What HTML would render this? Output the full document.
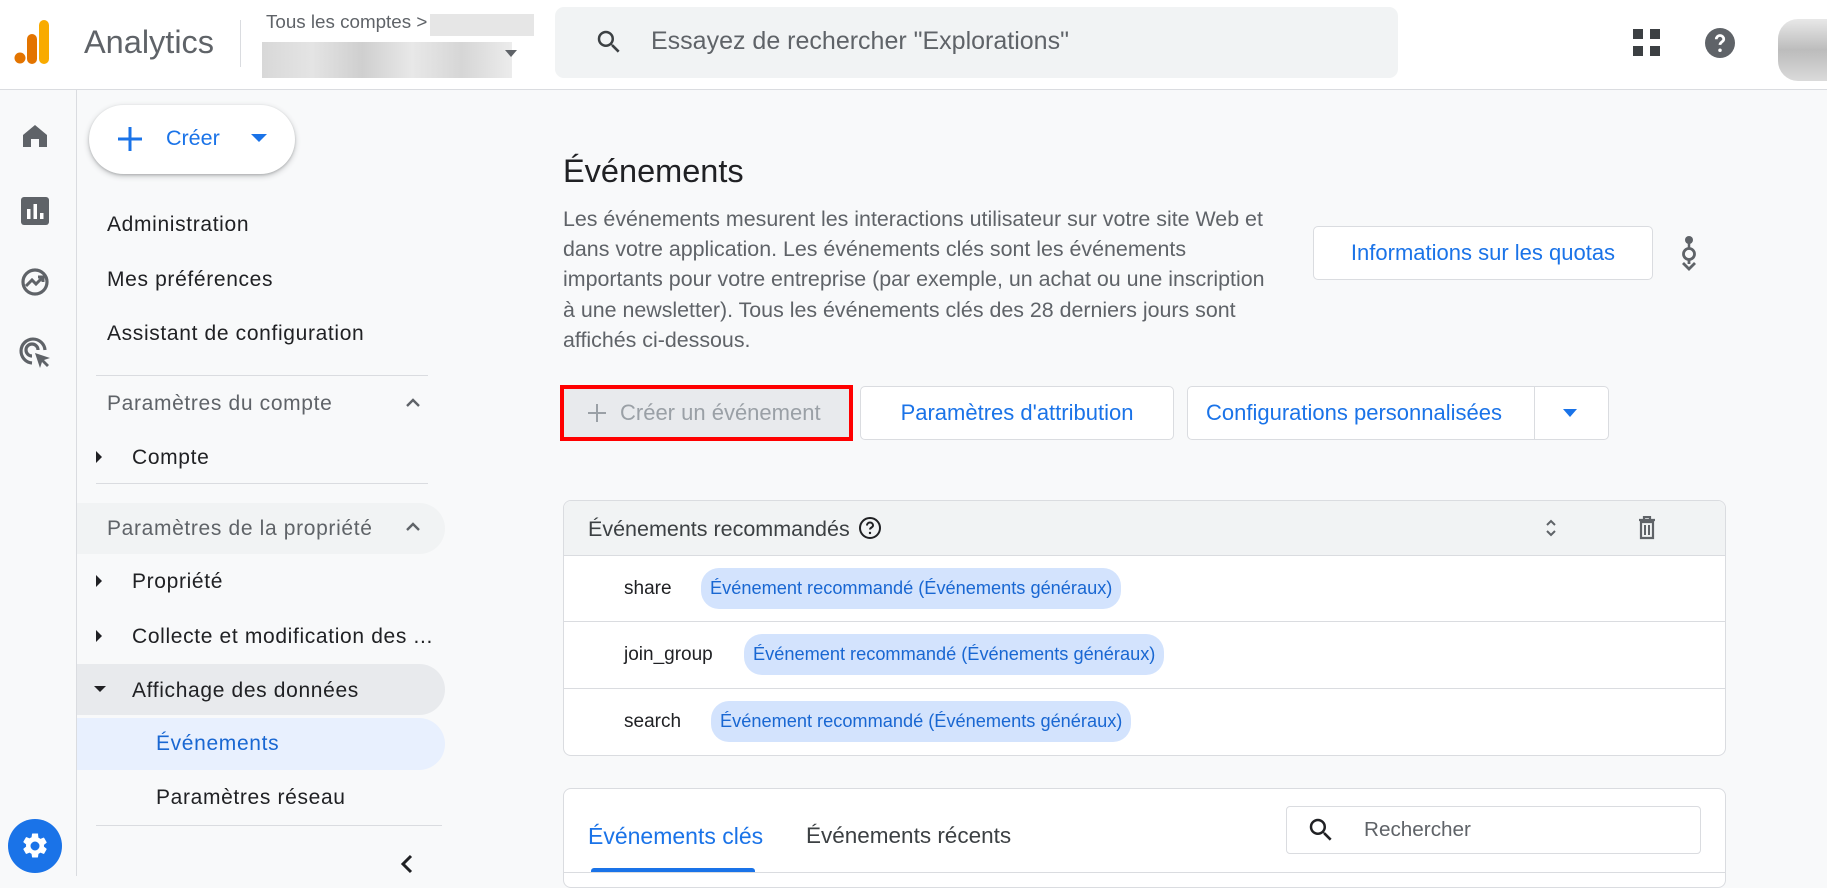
<!DOCTYPE html>
<html><head><meta charset="utf-8"><style>
*{box-sizing:border-box;margin:0;padding:0}
body{width:1827px;height:876px;overflow:hidden;background:#f8f9fa;font-family:"Liberation Sans",Arial,sans-serif;color:#202124;position:relative}
.abs{position:absolute}
.hdr{left:0;top:0;width:1827px;height:90px;background:#fff;border-bottom:1px solid #dadce0}
.rail{left:0;top:90px;width:77px;height:786px;border-right:1px solid #dadce0;background:#f8f9fa}
.nav{font-size:21px;letter-spacing:0.65px;color:#202124;white-space:nowrap}
.sep{height:1px;background:#dadce0}
.btn{background:#fff;border:1px solid #dadce0;border-radius:5px;color:#1a73e8;font-size:22px;display:flex;align-items:center;justify-content:center;white-space:nowrap}
.chip{background:#d3e3fd;color:#1967d2;border-radius:18px;height:41px;font-size:18.2px;display:flex;align-items:center;padding:0 9px;white-space:nowrap}
.rowt{font-size:19px;color:#202124}
</style></head><body>
<div class="abs hdr"></div>
<svg class="abs" style="left:14px;top:20px" width="36" height="44" viewBox="0 0 36 44"><rect x="25" y="0" width="10" height="44" rx="5" fill="#f9ab00"/><rect x="13" y="14" width="10" height="30" rx="5" fill="#e37400"/><circle cx="6" cy="38" r="5.5" fill="#e37400"/></svg>
<div class="abs" style="left:84px;top:24px;font-size:32.5px;color:#5f6368">Analytics</div>
<div class="abs" style="left:240px;top:20px;width:1px;height:47px;background:#dadce0"></div>
<div class="abs" style="left:266px;top:11px;font-size:18.8px;color:#5f6368">Tous les comptes &gt;</div>
<div class="abs" style="left:430px;top:14px;width:104px;height:22px;background:#e6e6e6"></div>
<div class="abs" style="left:262px;top:42px;width:250px;height:36px;background:linear-gradient(90deg,#d8d8d8,#e4e4e4,#cfcfcf,#e8e8e8,#d6d6d6,#ececec)"></div>
<svg class="abs" style="left:505px;top:50px" width="12" height="8"><path d="M0 0h12L6 7z" fill="#5f6368"/></svg>
<div class="abs" style="left:555px;top:7px;width:843px;height:71px;background:#f1f3f4;border-radius:9px"></div>
<svg class="abs" style="left:594px;top:27px" width="30" height="30" viewBox="0 0 24 24"><path d="M15.5 14h-.79l-.28-.27A6.47 6.470 0 0016 9.5 6.5 6.5 0 109.5 16c1.61 0 3.09-.59 4.23-1.57l.27.28v.79l5 4.99L20.49 19l-4.99-5zm-6 0C7.01 14 5 11.99 5 9.5S7.01 5 9.5 5 14 7.01 14 9.5 11.99 14 9.5 14z" fill="#3c4043"/></svg>
<div class="abs" style="left:651px;top:27px;font-size:25px;color:#5f6368">Essayez de rechercher "Explorations"</div>
<svg class="abs" style="left:1633px;top:29px" width="28" height="28"><rect x="0" y="0" width="10" height="10" fill="#3c4043"/><rect x="17" y="0" width="10" height="10" fill="#3c4043"/><rect x="0" y="17" width="10" height="10" fill="#3c4043"/><rect x="17" y="17" width="10" height="10" fill="#3c4043"/></svg>
<svg class="abs" style="left:1705px;top:28px" width="30" height="30" viewBox="0 0 24 24"><circle cx="12" cy="12" r="12" fill="#5f6368"/><path d="M9 9a3 3 0 116 0c0 2-3 2.2-3 4.5" stroke="#fff" stroke-width="2.2" fill="none"/><circle cx="12" cy="17.8" r="1.4" fill="#fff"/></svg>
<div class="abs" style="left:1778px;top:19px;width:49px;height:62px;background:linear-gradient(#e8e8e8,#bcbcbc 50%,#dadada);border-radius:20px 0 0 20px"></div>

<div class="abs rail"></div>
<svg class="abs" style="left:22px;top:124px" width="26" height="24" viewBox="0 0 26 24"><path d="M13 1L1 11v12h8v-8h8v8h8V11z" fill="#5f6368"/></svg>
<svg class="abs" style="left:21px;top:197px" width="28" height="28" viewBox="0 0 28 28"><rect x="0" y="0" width="28" height="28" rx="3" fill="#5f6368"/><rect x="6" y="12" width="3.5" height="10" fill="#fff"/><rect x="12.5" y="7" width="3.5" height="15" fill="#fff"/><rect x="19" y="16" width="3.5" height="6" fill="#fff"/></svg>
<svg class="abs" style="left:20px;top:268px" width="32" height="30" viewBox="0 0 32 30"><circle cx="15" cy="14" r="12" stroke="#5f6368" stroke-width="3.2" fill="none"/><path d="M6 18l6-6 4 4 7-7M18 9h5v5" stroke="#5f6368" stroke-width="3" fill="none"/></svg>
<svg class="abs" style="left:19px;top:337px" width="34" height="34" viewBox="0 0 34 34"><path d="M26 13A12 12 0 1013 26" stroke="#5f6368" stroke-width="3.2" fill="none"/><path d="M19 13a6 6 0 10-6 6" stroke="#5f6368" stroke-width="3.2" fill="none"/><path d="M16 16l15 5-6 2 5 5-2 2-5-5-2 6z" fill="#5f6368"/></svg>
<div class="abs" style="left:8px;top:819px;width:54px;height:54px;border-radius:50%;background:#1a73e8"></div>
<svg class="abs" style="left:20px;top:831px" width="30" height="30" viewBox="0 0 24 24"><path fill="#fff" d="M19.14 12.94a7.07 7.07 0 000-1.88l2.03-1.58a.49.49 0 00.12-.61l-1.92-3.32a.49.49 0 00-.59-.22l-2.39.96a7.03 7.03 0 00-1.62-.94l-.36-2.54A.48.48 0 0013.93 2h-3.84a.48.48 0 00-.48.41l-.36 2.54c-.59.24-1.13.56-1.62.94l-2.39-.96a.49.49 0 00-.59.22L2.73 8.47a.48.48 0 00.12.61l2.03 1.58a7.07 7.07 0 000 1.88l-2.03 1.58a.49.49 0 00-.12.61l1.92 3.32c.12.22.37.29.59.22l2.39-.96c.5.38 1.03.7 1.62.94l.36 2.54c.05.24.24.41.48.41h3.84c.24 0 .44-.17.47-.41l.36-2.54c.59-.24 1.13-.56 1.62-.94l2.39.96c.22.08.47 0 .59-.22l1.92-3.32a.49.49 0 00-.12-.61l-2.01-1.58zM12 15.6A3.6 3.6 0 1112 8.4a3.6 3.6 0 010 7.2z"/></svg>

<div class="abs" style="left:89px;top:105px;width:206px;height:69px;background:#fff;border-radius:35px;box-shadow:0 2px 6px rgba(60,64,67,.3),0 1px 2px rgba(60,64,67,.2)"></div>
<svg class="abs" style="left:117px;top:126px" width="26" height="26"><path d="M13 1v24M1 13h24" stroke="#1a73e8" stroke-width="3"/></svg>
<div class="abs" style="left:166px;top:126px;font-size:21.5px;color:#1a73e8">Créer</div>
<svg class="abs" style="left:251px;top:134px" width="16" height="9"><path d="M0 0h16L8 8z" fill="#1a73e8"/></svg>

<div class="abs nav" style="left:107px;top:213px">Administration</div>
<div class="abs nav" style="left:107px;top:268px">Mes préférences</div>
<div class="abs nav" style="left:107px;top:322px">Assistant de configuration</div>
<div class="abs sep" style="left:96px;top:375px;width:332px"></div>
<div class="abs nav" style="left:107px;top:392px;color:#5f6368">Paramètres du compte</div>
<svg class="abs" style="left:405px;top:398px" width="16" height="10"><path d="M2 8l6-6 6 6" stroke="#5f6368" stroke-width="2.4" fill="none"/></svg>
<svg class="abs" style="left:96px;top:451px" width="7" height="12"><path d="M0 0l6 6-6 6z" fill="#202124"/></svg>
<div class="abs nav" style="left:132px;top:446px">Compte</div>
<div class="abs sep" style="left:96px;top:483px;width:332px"></div>
<div class="abs" style="left:77px;top:503px;width:368px;height:51px;background:#f1f3f4;border-radius:0 26px 26px 0"></div>
<div class="abs nav" style="left:107px;top:517px;color:#5f6368">Paramètres de la propriété</div>
<svg class="abs" style="left:405px;top:522px" width="16" height="10"><path d="M2 8l6-6 6 6" stroke="#5f6368" stroke-width="2.4" fill="none"/></svg>
<svg class="abs" style="left:96px;top:575px" width="7" height="12"><path d="M0 0l6 6-6 6z" fill="#202124"/></svg>
<div class="abs nav" style="left:132px;top:570px">Propriété</div>
<svg class="abs" style="left:96px;top:630px" width="7" height="12"><path d="M0 0l6 6-6 6z" fill="#202124"/></svg>
<div class="abs nav" style="left:132px;top:625px">Collecte et modification des ...</div>
<div class="abs" style="left:77px;top:664px;width:368px;height:51px;background:#e8eaed;border-radius:0 26px 26px 0"></div>
<svg class="abs" style="left:94px;top:686px" width="12" height="7"><path d="M0 0h12L6 6z" fill="#202124"/></svg>
<div class="abs nav" style="left:132px;top:679px">Affichage des données</div>
<div class="abs" style="left:77px;top:718px;width:368px;height:52px;background:#e8f0fe;border-radius:0 26px 26px 0"></div>
<div class="abs nav" style="left:156px;top:732px;color:#1967d2">Événements</div>
<div class="abs nav" style="left:156px;top:786px">Paramètres réseau</div>
<div class="abs sep" style="left:96px;top:825px;width:346px"></div>
<svg class="abs" style="left:400px;top:854px" width="14" height="20"><path d="M11 2L3 10l8 8" stroke="#202124" stroke-width="3" fill="none"/></svg>

<div class="abs" style="left:563px;top:153px;font-size:32.5px;color:#202124">Événements</div>
<div class="abs" style="left:563px;top:204px;font-size:21.4px;line-height:30.2px;color:#5f6368;white-space:nowrap">Les événements mesurent les interactions utilisateur sur votre site Web et<br>dans votre application. Les événements clés sont les événements<br>importants pour votre entreprise (par exemple, un achat ou une inscription<br>à une newsletter). Tous les événements clés des 28 derniers jours sont<br>affichés ci-dessous.</div>
<div class="abs btn" style="left:1313px;top:226px;width:340px;height:54px">Informations sur les quotas</div>
<svg class="abs" style="left:1679px;top:236px" width="20" height="36" viewBox="0 0 20 36"><circle cx="10" cy="4" r="4" fill="#5f6368"/><path d="M10 6v6" stroke="#5f6368" stroke-width="2.5"/><circle cx="10" cy="18" r="5.5" stroke="#5f6368" stroke-width="2.8" fill="none"/><path d="M10 23v5M4 27l6 6 6-6" stroke="#5f6368" stroke-width="2.8" fill="none"/></svg>

<div class="abs" style="left:560px;top:385px;width:293px;height:56px;border:4px solid #f00;background:#e8eaed;display:flex;align-items:center;padding-left:24px;color:#9aa0a6;font-size:22px;white-space:nowrap">
<svg width="18" height="18" style="margin-right:14px;flex:none"><path d="M9 0v18M0 9h18" stroke="#9aa0a6" stroke-width="2"/></svg>Créer un événement</div>
<div class="abs btn" style="left:860px;top:386px;width:314px;height:54px">Paramètres d'attribution</div>
<div class="abs btn" style="left:1187px;top:386px;width:422px;height:54px;justify-content:flex-start;padding-left:18px">Configurations personnalisées</div>
<div class="abs" style="left:1534px;top:387px;width:1px;height:52px;background:#dadce0"></div>
<svg class="abs" style="left:1563px;top:409px" width="14" height="8"><path d="M0 0h14L7 8z" fill="#1a73e8"/></svg>

<div class="abs" style="left:563px;top:500px;width:1163px;height:256px;background:#fff;border:1px solid #dadce0;border-radius:8px;overflow:hidden">
 <div style="height:55px;background:#f1f3f4;border-bottom:1px solid #dadce0;position:relative">
  <div class="abs" style="left:24px;top:16px;font-size:21.5px;color:#3c4043">Événements recommandés</div>
  <svg class="abs" style="left:294px;top:15px" width="24" height="24" viewBox="0 0 24 24"><circle cx="12" cy="12" r="10" stroke="#202124" stroke-width="2" fill="none"/><path d="M9 9.5a3 3 0 116 0c0 2-3 2-3 4" stroke="#202124" stroke-width="2" fill="none"/><circle cx="12" cy="17" r="1.2" fill="#202124"/></svg>
  <svg class="abs" style="left:981px;top:17px" width="12" height="20"><path d="M2 7l4-4 4 4M2 13l4 4 4-4" stroke="#5f6368" stroke-width="2" fill="none"/></svg>
  <svg class="abs" style="left:1073px;top:15px" width="20" height="24" viewBox="0 0 20 24"><path d="M2 4h16M7 4V1h6v3M4 6h12v16H4z" stroke="#5f6368" stroke-width="2.2" fill="none"/><path d="M8 9v10M12 9v10" stroke="#5f6368" stroke-width="2"/></svg>
 </div>
 <div style="height:66px;border-bottom:1px solid #dadce0;position:relative"><div class="abs rowt" style="left:60px;top:22px">share</div><div class="abs chip" style="left:137px;top:12px">Événement recommandé (Événements généraux)</div></div>
 <div style="height:67px;border-bottom:1px solid #dadce0;position:relative"><div class="abs rowt" style="left:60px;top:22px">join_group</div><div class="abs chip" style="left:180px;top:12px">Événement recommandé (Événements généraux)</div></div>
 <div style="height:67px;position:relative"><div class="abs rowt" style="left:60px;top:22px">search</div><div class="abs chip" style="left:147px;top:12px">Événement recommandé (Événements généraux)</div></div>
</div>

<div class="abs" style="left:563px;top:788px;width:1163px;height:100px;background:#fff;border:1px solid #dadce0;border-radius:8px"></div>
<div class="abs" style="left:588px;top:823px;font-size:23px;color:#1a73e8">Événements clés</div>
<div class="abs" style="left:806px;top:823px;font-size:22.5px;color:#3c4043">Événements récents</div>
<div class="abs" style="left:591px;top:868px;width:164px;height:5px;background:#1a73e8;border-radius:3px 3px 0 0"></div>
<div class="abs" style="left:564px;top:872px;width:1161px;height:1px;background:#dadce0"></div>
<div class="abs" style="left:1286px;top:806px;width:415px;height:48px;border:1px solid #dadce0;border-radius:4px;background:#fff"></div>
<svg class="abs" style="left:1306px;top:815px" width="30" height="30" viewBox="0 0 24 24"><path d="M15.5 14h-.79l-.28-.27A6.47 6.47 0 0016 9.5 6.5 6.5 0 109.5 16c1.61 0 3.09-.59 4.23-1.57l.27.28v.79l5 4.99L20.49 19l-4.99-5zm-6 0C7.01 14 5 11.99 5 9.5S7.01 5 9.5 5 14 7.01 14 9.5 11.99 14 9.5 14z" fill="#202124"/></svg>
<div class="abs" style="left:1364px;top:818px;font-size:20.7px;color:#5f6368">Rechercher</div>
</body></html>
